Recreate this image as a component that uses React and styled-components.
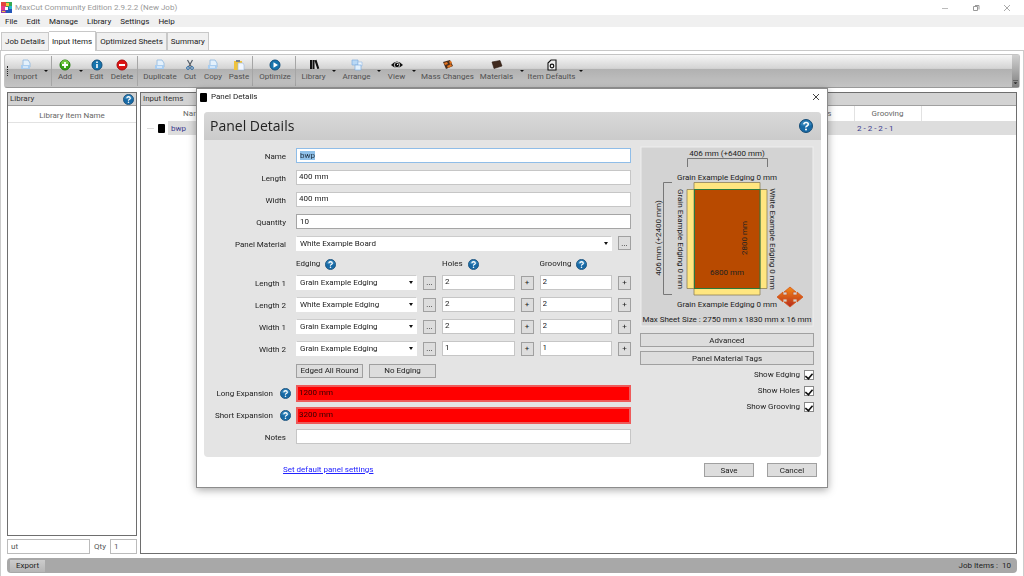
import React, { useEffect, useRef } from 'react';
import styled, { createGlobalStyle, css } from 'styled-components';

const GlobalStyle = createGlobalStyle`
  * {
    box-sizing: border-box;
  }

  body {
    margin: 0;
    background: #fff;
  }

  body, button, input, select {
    font-family: Roboto, 'Open Sans', sans-serif;
    font-size: 8px;
    line-height: 12px;
    color: #222;
  }
`;

const Window = styled.div`
  display: flex;
  flex-direction: column;
  height: 100vh;
  overflow: hidden;
`;

const TitleBar = styled.header`
  display: flex;
  align-items: center;
  gap: 3px;
  height: 15px;
  padding: 0 13px 0 1px;
  color: #999;
`;

const WindowControls = styled.div`
  display: flex;
  gap: 23px;
  margin-left: auto;
`;

const IconButton = styled.button`
  display: flex;
  padding: 0;
  border: 0;
  background: none;
`;

const MenuBar = styled.nav`
  display: flex;
  gap: 9px;
  height: 12px;
  padding: 0 5px;
  background: #f0f0f0;
`;

const MenuItem = styled.button`
  padding: 1px 0 0;
  border: 0;
  background: none;
`;

const TabBar = styled.div`
  display: flex;
  align-items: flex-end;
  height: 24px;
  padding-left: 1px;
  border-bottom: 1px solid #c8c8c8;
`;

const Tab = styled.button`
  height: ${(p) => (p.$active ? 20 : 18)}px;
  margin-bottom: ${(p) => (p.$active ? -1 : 0)}px;
  padding: 0 3px;
  border: 1px solid #c8c8c8;
  border-bottom: 0;
  border-left-width: ${(p) => (p.$active ? 0 : 1)}px;
  background: ${(p) => (p.$active ? '#fff' : '#f0f0f0')};
`;

const Workspace = styled.main`
  display: flex;
  flex: 1;
  flex-direction: column;
  gap: 4px;
  min-height: 0;
  padding: 3px 3px 3px;
  border-right: 1px solid #ccc;
  border-left: 1px solid #ccc;
`;

const Toolbar = styled.div`
  display: flex;
  align-items: center;
  height: 34px;
  padding-left: 2px;
  border: 1px solid #c4c4c4;
  border-bottom: 1px solid #999;
  border-radius: 3px;
  background: linear-gradient(#f6f6f6 0%, #d4d4d4 42%, #b1b1b1 44%, #c4c4c4 100%);
`;

const Grip = styled.div`
  width: 3px;
  height: 10px;
  border-left: 1px dotted #222;
`;

const Tool = styled.button`
  display: flex;
  flex: none;
  flex-direction: column;
  align-items: center;
  width: ${(p) => p.$width}px;
  padding: 0 0 1px;
  border: 0;
  background: none;
  color: #505050;
  white-space: nowrap;
`;

const ToolArrow = styled.button`
  width: 10px;
  padding: 0 3px;
  border: 0;
  background: none;

  &::after {
    content: '';
    display: block;
    border: 2px solid transparent;
    border-top-color: #111;
    border-bottom: 0;
  }
`;

const Divider = styled.div`
  width: 3px;
  height: 30px;
  border-left: 1px solid #a6a6a6;
`;

const Overflow = styled.div`
  display: flex;
  align-items: flex-end;
  justify-content: center;
  align-self: stretch;
  width: 7px;
  margin-left: auto;
  padding-bottom: 2px;
  background: linear-gradient(#d0d0d0, #808080);
`;

const Panels = styled.div`
  display: grid;
  flex: 1;
  grid-template-columns: 130px 1fr;
  gap: 3px;
  min-height: 0;
  padding: 0 3px;
`;

const Sidebar = styled.aside`
  display: flex;
  flex-direction: column;
  gap: 3px;
  min-width: 0;
`;

const Panel = styled.section`
  flex: 1;
  min-width: 0;
  overflow: hidden;
  border: 1px solid #6e6e6e;
  background: #fff;
`;

const PanelTitle = styled.h2`
  display: flex;
  align-items: center;
  justify-content: space-between;
  height: 13px;
  margin: 0;
  padding: 0 2px;
  border-bottom: 1px solid #a0a0a0;
  background: #d3d3d3;
  font-size: 8px;
  font-weight: 400;
  color: #333;
`;

const ListHeader = styled.div`
  height: 17px;
  border-bottom: 1px solid #e2e2e2;
  color: #666;
  line-height: 20px;
  text-align: center;
`;

const SearchRow = styled.div`
  display: flex;
  align-items: center;
  justify-content: space-between;
  height: 15px;
  color: #555;
`;

const SearchInput = styled.input`
  width: ${(p) => p.$width};
  min-width: 0;
  height: 15px;
  padding: 0 3px;
  border: 1px solid #bbb;
  color: #555;
`;

const ItemTable = styled.table`
  width: 100%;
  table-layout: fixed;
  border-collapse: collapse;

  th {
    height: 15px;
    padding: 0;
    border-right: 1px solid #e2e2e2;
    color: #666;
    font-weight: 400;
  }

  th:first-child, th:last-child {
    border-right: 0;
  }

  td {
    height: 14px;
    padding: 1px 3px 0;
    background: #ddd;
    color: #3b3b8f;
  }

  td:first-child {
    background: #fff;
  }
`;

const TreeNode = styled.div`
  display: flex;
  align-items: center;
  gap: 4px;
  padding-left: 3px;

  &::before {
    content: '';
    width: 7px;
    border-top: 1px solid #ddd;
  }
`;

const Swatch = styled.span`
  width: 7px;
  height: 9px;
  border-radius: 1px;
  background: #000;
`;

const StatusBar = styled.footer`
  display: flex;
  align-items: center;
  justify-content: space-between;
  height: 15px;
  margin: 0 3px;
  padding: 0 6px 0 3px;
  border-radius: 4px;
  background: #a8a8a8;
`;

const ExportButton = styled.button`
  height: 12px;
  padding: 0 6px;
  border: 0;
  background: linear-gradient(#ccc, #b6b6b6);
`;

const Overlay = styled.div`
  position: fixed;
  inset: 0;
  display: flex;
  align-items: center;
  justify-content: center;
`;

const Dialog = styled.form`
  width: 632px;
  padding-bottom: 10px;
  border: 1px solid #8c8c8c;
  background: #fff;
  box-shadow: 0 2px 8px rgba(0, 0, 0, 0.35);
`;

const DialogTitle = styled.div`
  display: flex;
  align-items: center;
  gap: 4px;
  height: 23px;
  padding: 0 7px 7px 3px;

  button {
    margin-left: auto;
  }
`;

const Card = styled.div`
  margin: 0 6px 0 7px;
  overflow: hidden;
  border-radius: 4px;
  background: #e4e4e4;
`;

const CardHeader = styled.div`
  display: flex;
  align-items: center;
  justify-content: space-between;
  height: 28px;
  padding: 0 8px 0 6px;
  background: linear-gradient(#d9d9d9, #cbcbcb);
`;

const Heading = styled.h1`
  margin: 0;
  font-family: 'Open Sans', sans-serif;
  font-size: 14px;
  font-weight: 400;
  line-height: 20px;
`;

const CardBody = styled.div`
  display: grid;
  grid-template-columns: 1fr 174px;
  gap: 9px;
  padding: 8px 7px 13px 0;
`;

const Fields = styled.div`
  display: flex;
  flex-direction: column;
  gap: 7px;
`;

const Row = styled.div`
  display: grid;
  grid-template-columns: 82px 1fr;
  align-items: center;
  gap: 10px;
  height: ${(p) => (p.$short ? 10 : 15)}px;
`;

const Label = styled.label`
  display: flex;
  align-items: center;
  justify-content: flex-end;
  gap: 7px;
  padding-top: 2px;
  white-space: nowrap;
`;

const HelpLabel = styled(Label)`
  margin-right: -5px;
  padding-top: 0;
`;

const EdgeGrid = styled.div`
  display: grid;
  grid-template-columns: 121px 13px 1fr 13px 1fr 13px;
  align-items: center;
  gap: 6px;
`;

const MaterialGrid = styled.div`
  display: grid;
  grid-template-columns: 1fr 13px;
  gap: 6px;
`;

const ColumnTitle = styled.div`
  display: flex;
  align-items: center;
  gap: 5px;
  grid-column: span 2;
`;

const ButtonRow = styled.div`
  display: flex;
  gap: 6px;
`;

const TextInput = styled.input`
  width: 100%;
  min-width: 0;
  height: 15px;
  padding: 0 3px;
  border: 1px solid #c6c6c6;
  background: #fff;
  outline: 0;

  ${(p) => p.$raised && css`
    padding: 0 2px 3px;
  `}

  ${(p) => p.$strong && css`
    border-color: #a5a5a5;
  `}

  ${(p) => p.$invalid && css`
    height: 17px;
    border: 2px solid #ee5a5a;
    padding: 0 1px 3px;
    background: #f00;
    color: #300;
  `}

  &:focus {
    border-color: #8fbde8;
  }

  &::selection {
    background: #8fc1e9;
    color: #234;
  }
`;

const SelectWrap = styled.div`
  position: relative;

  &::after {
    content: '';
    position: absolute;
    top: 6px;
    right: 4px;
    border: 2px solid transparent;
    border-top: 3px solid #111;
    border-bottom: 0;
    pointer-events: none;
  }
`;

const SelectBox = styled.select`
  display: block;
  width: 100%;
  height: 15px;
  padding: 1px 3px 0;
  border: 1px solid #fff;
  border-top-color: #ccc;
  border-radius: 0;
  background: #fff;
  appearance: none;
`;

const Button = styled.button`
  width: ${(p) => p.$width || 'auto'};
  height: 14px;
  padding: 0;
  border: 1px solid #a0a0a0;
  background: #ddd;
  line-height: 11px;
`;

const Side = styled.div`
  display: flex;
  flex-direction: column;
  gap: 4px;
`;

const Preview = styled.svg`
  display: block;
  width: 100%;
  margin: -2px 0 2px;
  font-size: 8px;
`;

const Checks = styled.div`
  display: flex;
  flex-direction: column;
  align-items: flex-end;
  gap: 4px;
`;

const CheckLabel = styled.label`
  display: flex;
  align-items: center;
  gap: 4px;
`;

const CheckBox = styled.input`
  display: grid;
  place-items: center;
  width: 10px;
  height: 10px;
  margin: 0;
  border: 1px solid #888;
  background: #fff;
  appearance: none;

  &:checked::before {
    content: '';
    width: 4px;
    height: 7px;
    margin-bottom: 2px;
    border: solid #111;
    border-width: 0 2px 2px 0;
    transform: rotate(40deg) scale(0.8);
  }
`;

const DialogFooter = styled.div`
  display: flex;
  align-items: center;
  gap: 13px;
  padding: 6px 10px 0 86px;
`;

const Link = styled.a`
  margin-right: auto;
  color: #22f;
`;

function HelpIcon({ size = 11 }) {
  return (
    <svg width={size} height={size} viewBox="0 0 14 14">
      <circle cx="7" cy="7" r="6.5" fill="#1769a5" stroke="#174d76" />
      <path d="M1.5 6a5.6 5.6 0 0 1 11 0Q7 8 1.5 6z" fill="#4d9bcc" opacity=".5" />
      <path d="M4.8 5.4Q5 3.5 7.1 3.5T9.3 5.3Q9.3 6.3 8 7T7 8.5" fill="none" stroke="#fff" strokeWidth="1.6" />
      <circle cx="7" cy="10.5" r="1" fill="#fff" />
    </svg>
  );
}

function Logo() {
  return (
    <svg width="11" height="11" viewBox="0 0 11 11">
      <path d="M0 0h5v4H0z" fill="#e2453f" />
      <path d="M5 0h6v5H5z" fill="#35a853" />
      <path d="M0 4h5v4H0z" fill="#e73c8c" />
      <path d="M5 5h6v6H5z" fill="#2456b8" />
      <path d="M0 8h5v3H0z" fill="#8c3ca8" />
      <path d="M5 1h3v3H5zM1 9h3v1H1z" fill="#f6c43c" />
      <path d="M4 5h3v3H4z" fill="#fff" />
      <path d="M8 4h3v3H8z" fill="#25b6cc" />
    </svg>
  );
}

function CloseIcon({ color }) {
  return (
    <svg width="8" height="8" viewBox="0 0 8 8">
      <path d="M1 1l6 6M7 1L1 7" stroke={color} fill="none" />
    </svg>
  );
}

const icons = {
  page: (
    <>
      <path d="M3 1h5l2 3v4H3z" fill="#e4f1fc" stroke="#8db7e0" strokeWidth=".8" />
      <path d="M1 6h9v4H1z" fill="#a9cdf0" />
      <path d="M3 8h5" stroke="#fff" />
    </>
  ),
  add: (
    <>
      <circle cx="6" cy="6" r="5" fill="#38a313" stroke="#22780b" />
      <path d="M2 5a4 4 0 0 1 8 0z" fill="#8cd653" opacity=".7" />
      <path d="M6 3v6M3 6h6" stroke="#fff" strokeWidth="1.8" />
    </>
  ),
  info: (
    <>
      <circle cx="6" cy="6" r="5" fill="#1674ad" stroke="#134f7b" />
      <path d="M6 5v4M6 2.5v1.5" stroke="#fff" strokeWidth="1.6" />
    </>
  ),
  remove: (
    <>
      <circle cx="6" cy="6" r="5" fill="#dc1414" stroke="#a60c0c" />
      <path d="M3 6h6" stroke="#fff" strokeWidth="2" />
    </>
  ),
  cut: (
    <>
      <path d="M3.5 1l4 7M8.5 1l-4 7" stroke="#555e68" strokeWidth="1.2" />
      <circle cx="4" cy="9" r="1.4" fill="none" stroke="#2b6ca8" />
      <circle cx="8" cy="9" r="1.4" fill="none" stroke="#2b6ca8" />
    </>
  ),
  paste: (
    <>
      <path d="M1 2h8v9H1z" fill="#efc33c" />
      <path d="M3 1h4v2H3z" fill="#77828f" />
      <path d="M5 4h5l1 2v5H5z" fill="#f1f6fd" stroke="#9cb9da" strokeWidth=".6" />
    </>
  ),
  play: (
    <>
      <circle cx="6" cy="6" r="5" fill="#1674ad" stroke="#134f7b" />
      <path d="M4.5 3.2L9 6 4.5 8.8z" fill="#fff" />
    </>
  ),
  books: (
    <path d="M2 1h2v9H2zM4.500 1h2v9h-2zM6.500 1.400l2-.6 2.800 8.600-2 .6z" fill="#111" />
  ),
  arrange: (
    <>
      <path d="M1 1h6v5H1z" fill="#b9d8f5" stroke="#83afe0" strokeWidth=".7" />
      <path d="M7 3h4v4H7z" fill="#eef6fd" stroke="#9bbfe6" strokeWidth=".7" />
      <path d="M4 6h6v5H4z" fill="#e2f0fc" stroke="#83afe0" strokeWidth=".7" />
    </>
  ),
  eye: (
    <>
      <path d="M0 6Q6-1 12 6 6 12 0 6z" fill="#111" />
      <circle cx="6" cy="6" r="2.7" fill="none" stroke="#ddd" strokeWidth=".8" />
      <circle cx="6.6" cy="5.4" r=".7" fill="#fff" />
    </>
  ),
  changes: (
    <>
      <path d="M1 3l7-2 3 6-7 3z" fill="#4a2f1e" />
      <path d="M2 4l3-1 1 2-3 1zM7 2.5L9 2l1 2-2 1zM5 7l4-2 1 2-4 2z" fill="#e57520" />
    </>
  ),
  materials: <path d="M1 3l8-1.5 2 5.5-8 2.5z" fill="#402a1e" stroke="#2e1d14" strokeWidth=".6" />,
  defaults: (
    <>
      <path d="M2 4l3-3h5v10H2z" fill="#eee" stroke="#111" strokeWidth="1.1" />
      <circle cx="6" cy="7" r="1.8" fill="none" stroke="#111" strokeWidth="1.2" />
    </>
  ),
};

const tools = [
  [{ label: 'Import', icon: 'page', width: 31, arrow: true }],
  [
    { label: 'Add', icon: 'add', width: 22, arrow: true },
    { label: 'Edit', icon: 'info', width: 21 },
    { label: 'Delete', icon: 'remove', width: 30 },
  ],
  [
    { label: 'Duplicate', icon: 'page', width: 40 },
    { label: 'Cut', icon: 'cut', width: 20 },
    { label: 'Copy', icon: 'page', width: 26 },
    { label: 'Paste', icon: 'paste', width: 26 },
  ],
  [{ label: 'Optimize', icon: 'play', width: 40 }],
  [
    { label: 'Library', icon: 'books', width: 31, arrow: true },
    { label: 'Arrange', icon: 'arrange', width: 35, arrow: true },
    { label: 'View', icon: 'eye', width: 25, arrow: true },
    { label: 'Mass Changes', icon: 'changes', width: 57 },
    { label: 'Materials', icon: 'materials', width: 41, arrow: true },
    { label: 'Item Defaults', icon: 'defaults', width: 49, arrow: true },
  ],
];

const edges = [
  { label: 'Length 1', edging: 'Grain Example Edging', holes: 2, grooving: 2 },
  { label: 'Length 2', edging: 'White Example Edging', holes: 2, grooving: 2 },
  { label: 'Width 1', edging: 'Grain Example Edging', holes: 2, grooving: 2 },
  { label: 'Width 2', edging: 'Grain Example Edging', holes: 1, grooving: 1 },
];

function Select({ id, value }) {
  return (
    <SelectWrap>
      <SelectBox id={id} defaultValue={value}>
        <option>{value}</option>
      </SelectBox>
    </SelectWrap>
  );
}

function Field({ id, label, help, inputRef, ...rest }) {
  const Caption = help ? HelpLabel : Label;
  return (
    <Row>
      <Caption htmlFor={id}>
        {label}
        {help && <HelpIcon />}
      </Caption>
      <TextInput id={id} ref={inputRef} {...rest} />
    </Row>
  );
}

function PanelPreview() {
  return (
    <Preview viewBox="0 0 174 181">
      <rect x="1" y="1" width="172" height="179" fill="#d3d3d3" stroke="#eee" />
      <g fill="none" stroke="#777">
        <path d="M47.5 21v-8.5h80V21M32 36.5h-8.5v112H32" />
      </g>
      <g fill="#ffe680" stroke="#8d8058" strokeWidth=".8">
        <path d="M54 36.5h66v7H54zM54 142.5h66v6.5H54zM47 43.5h7v99h-7zM120 43.5h7v99h-7z" />
      </g>
      <rect x="54.5" y="43.5" width="65.5" height="99" fill="#b84a00" stroke="#2b7a3d" />
      <g fill="#222" textAnchor="middle">
        <text x="87" y="10">406 mm (+6400 mm)</text>
        <text x="87" y="34">Grain Example Edging 0 mm</text>
        <text x="87" y="161">Grain Example Edging 0 mm</text>
        <text x="87" y="176">Max Sheet Size : 2750 mm x 1830 mm x 16 mm</text>
        <text x="87" y="129">6800 mm</text>
        <text transform="translate(107 92) rotate(-90)">2800 mm</text>
        <text transform="translate(21 92) rotate(-90)">406 mm (+2400 mm)</text>
        <text transform="translate(38 93) rotate(90)">Grain Example Edging 0 mm</text>
        <text transform="translate(130 93) rotate(90)">White Example Edging 0 mm</text>
      </g>
      <linearGradient id="move" x2="0" y2="1">
        <stop stopColor="#f58a14" />
        <stop offset="1" stopColor="#b52a20" />
      </linearGradient>
      <path
        d="M150 141l6 5h-3v3h4v-3l6 5-6 5v-3h-4v3h3l-6 5-6-5h3v-3h-4v3l-6-5 6-5v3h4v-3h-3z"
        fill="url(#move)"
        stroke="#d4571a"
        strokeWidth=".8"
      />
    </Preview>
  );
}

function PanelDialog() {
  const nameRef = useRef(null);

  useEffect(() => {
    nameRef.current.focus();
    nameRef.current.select();
  }, []);

  return (
    <Overlay>
      <Dialog role="dialog" aria-label="Panel Details" onSubmit={(e) => e.preventDefault()}>
        <DialogTitle>
          <Swatch />
          Panel Details
          <IconButton type="button" aria-label="Close"><CloseIcon color="#444" /></IconButton>
        </DialogTitle>
        <Card>
          <CardHeader>
            <Heading>Panel Details</Heading>
            <HelpIcon size={14} />
          </CardHeader>
          <CardBody>
            <Fields>
              <Field id="name" label="Name" defaultValue="bwp" inputRef={nameRef} />
              <Field id="length" label="Length" defaultValue="400 mm" $raised />
              <Field id="width" label="Width" defaultValue="400 mm" $raised />
              <Field id="quantity" label="Quantity" defaultValue="10" $strong />
              <Row>
                <Label htmlFor="material">Panel Material</Label>
                <MaterialGrid>
                  <Select id="material" value="White Example Board" />
                  <Button type="button">...</Button>
                </MaterialGrid>
              </Row>
              <Row $short>
                <span />
                <EdgeGrid>
                  <ColumnTitle>Edging <HelpIcon /></ColumnTitle>
                  <ColumnTitle>Holes <HelpIcon /></ColumnTitle>
                  <ColumnTitle>Grooving <HelpIcon /></ColumnTitle>
                </EdgeGrid>
              </Row>
              {edges.map((edge) => (
                <Row key={edge.label}>
                  <Label htmlFor={edge.label}>{edge.label}</Label>
                  <EdgeGrid>
                    <Select id={edge.label} value={edge.edging} />
                    <Button type="button">...</Button>
                    <TextInput aria-label={`${edge.label} holes`} defaultValue={edge.holes} $raised />
                    <Button type="button">+</Button>
                    <TextInput aria-label={`${edge.label} grooving`} defaultValue={edge.grooving} $raised />
                    <Button type="button">+</Button>
                  </EdgeGrid>
                </Row>
              ))}
              <Row>
                <span />
                <ButtonRow>
                  <Button type="button" $width="67px">Edged All Round</Button>
                  <Button type="button" $width="67px">No Edging</Button>
                </ButtonRow>
              </Row>
              <Field id="long" label="Long Expansion" defaultValue="1200 mm" help $invalid />
              <Field id="short" label="Short Expansion" defaultValue="3200 mm" help $invalid />
              <Field id="notes" label="Notes" />
            </Fields>
            <Side>
              <PanelPreview />
              <Button type="button">Advanced</Button>
              <Button type="button">Panel Material Tags</Button>
              <Checks>
                {['Show Edging', 'Show Holes', 'Show Grooving'].map((label) => (
                  <CheckLabel key={label}>
                    {label}
                    <CheckBox type="checkbox" defaultChecked />
                  </CheckLabel>
                ))}
              </Checks>
            </Side>
          </CardBody>
        </Card>
        <DialogFooter>
          <Link href="#defaults">Set default panel settings</Link>
          <Button $width="50px">Save</Button>
          <Button type="button" $width="50px">Cancel</Button>
        </DialogFooter>
      </Dialog>
    </Overlay>
  );
}

function App() {
  return (
    <>
      <GlobalStyle />
      <Window>
        <TitleBar>
          <Logo />
          MaxCut Community Edition 2.9.2.2 (New Job)
          <WindowControls>
            <IconButton aria-label="Minimize">
              <svg width="8" height="8"><path d="M1 4.5h6" stroke="#bbb" /></svg>
            </IconButton>
            <IconButton aria-label="Restore">
              <svg width="8" height="8">
                <path d="M1.5 2.5h4v4h-4zM3 1.5h4v4" fill="none" stroke="#999" />
              </svg>
            </IconButton>
            <IconButton aria-label="Close"><CloseIcon color="#aaa" /></IconButton>
          </WindowControls>
        </TitleBar>
        <MenuBar>
          {['File', 'Edit', 'Manage', 'Library', 'Settings', 'Help'].map((item) => (
            <MenuItem key={item}>{item}</MenuItem>
          ))}
        </MenuBar>
        <TabBar>
          <Tab>Job Details</Tab>
          <Tab $active>Input Items</Tab>
          <Tab>Optimized Sheets</Tab>
          <Tab>Summary</Tab>
        </TabBar>
        <Workspace>
          <Toolbar>
            <Grip />
            {tools.map((group, i) => (
              <React.Fragment key={i}>
                {i > 0 && <Divider />}
                {group.map((tool) => (
                  <React.Fragment key={tool.label}>
                    <Tool $width={tool.width}>
                      <svg width="12" height="12" viewBox="0 0 12 12">{icons[tool.icon]}</svg>
                      {tool.label}
                    </Tool>
                    {tool.arrow && <ToolArrow aria-label={`${tool.label} options`} />}
                  </React.Fragment>
                ))}
              </React.Fragment>
            ))}
            <Overflow>
              <svg width="5" height="5"><path d="M0 .5h5M1 2.5h3L2.5 4z" stroke="#444" strokeWidth=".6" /></svg>
            </Overflow>
          </Toolbar>
          <Panels>
            <Sidebar>
              <Panel>
                <PanelTitle>Library <HelpIcon /></PanelTitle>
                <ListHeader>Library Item Name</ListHeader>
              </Panel>
              <SearchRow>
                <SearchInput aria-label="Search" defaultValue="ut" $width="83px" />
                <label htmlFor="qty">Qty</label>
                <SearchInput id="qty" defaultValue="1" $width="27px" />
              </SearchRow>
            </Sidebar>
            <Panel>
              <PanelTitle>Input Items</PanelTitle>
              <ItemTable>
                <colgroup>
                  <col width="27" />
                  <col width="52" />
                  <col width="568" />
                  <col width="66" />
                  <col width="67" />
                  <col />
                </colgroup>
                <thead>
                  <tr>
                    <th />
                    <th>Name</th>
                    <th />
                    <th>Holes</th>
                    <th>Grooving</th>
                    <th />
                  </tr>
                </thead>
                <tbody>
                  <tr>
                    <td><TreeNode><Swatch /></TreeNode></td>
                    <td>bwp</td>
                    <td />
                    <td>2 - 2 - 2 - 2</td>
                    <td>2 - 2 - 2 - 1</td>
                    <td />
                  </tr>
                </tbody>
              </ItemTable>
            </Panel>
          </Panels>
          <StatusBar>
            <ExportButton>Export</ExportButton>
            <span>Job Items :&nbsp; 10</span>
          </StatusBar>
        </Workspace>
      </Window>
      <PanelDialog />
    </>
  );
}

export default App;
